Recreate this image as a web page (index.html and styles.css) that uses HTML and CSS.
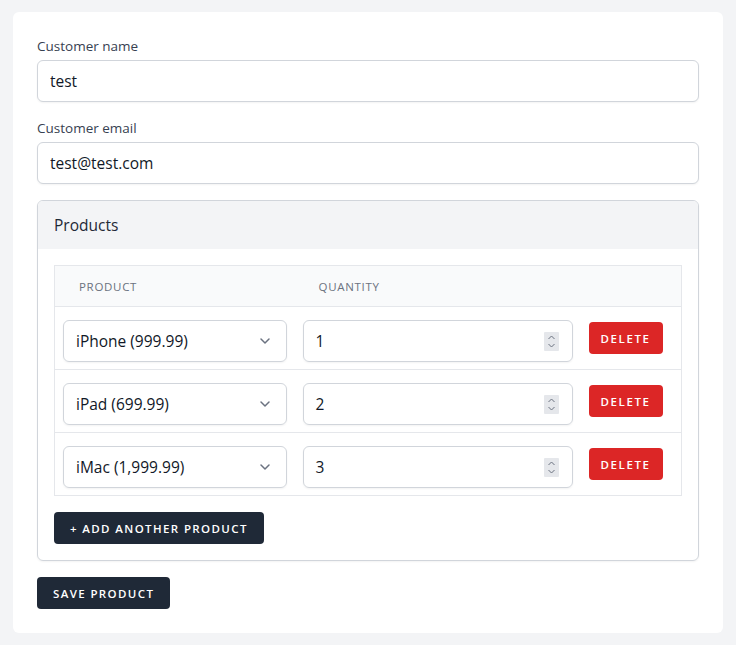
FILE: index.html
```html
<!DOCTYPE html>
<html>
<head>
<meta charset="utf-8">
<link rel="stylesheet" href="styles.css">
</head>
<body>
<div class="page">
  <form class="card">
    <div class="field">
      <label class="label">Customer name</label>
      <input class="input" type="text" value="test">
    </div>
    <div class="field">
      <label class="label">Customer email</label>
      <input class="input" type="text" value="test@test.com">
    </div>
    <div class="panel">
      <div class="panel-head">Products</div>
      <div class="panel-body">
        <table class="table">
          <colgroup><col class="c1"><col class="c2"><col class="c3"></colgroup>
          <thead>
            <tr><th>Product</th><th>Quantity</th><th></th></tr>
          </thead>
          <tbody>
            <tr>
              <td><div class="select"><span>iPhone (999.99)</span><svg class="chev" viewBox="0 0 20 20" width="20" height="20"><path d="M6 8l4 4 4-4" fill="none" stroke="#6b7280" stroke-width="1.5" stroke-linecap="round" stroke-linejoin="round"/></svg></div></td>
              <td><div class="num"><span>1</span><span class="spin"><svg viewBox="0 0 15 19" width="15" height="19"><path d="M4.5 7l3-3 3 3M4.5 12l3 3 3-3" fill="none" stroke="#6b7280" stroke-width="1"/></svg></span></div></td>
              <td><button type="button" class="btn-del">Delete</button></td>
            </tr>
            <tr>
              <td><div class="select"><span>iPad (699.99)</span><svg class="chev" viewBox="0 0 20 20" width="20" height="20"><path d="M6 8l4 4 4-4" fill="none" stroke="#6b7280" stroke-width="1.5" stroke-linecap="round" stroke-linejoin="round"/></svg></div></td>
              <td><div class="num"><span>2</span><span class="spin"><svg viewBox="0 0 15 19" width="15" height="19"><path d="M4.5 7l3-3 3 3M4.5 12l3 3 3-3" fill="none" stroke="#6b7280" stroke-width="1"/></svg></span></div></td>
              <td><button type="button" class="btn-del">Delete</button></td>
            </tr>
            <tr>
              <td><div class="select"><span>iMac (1,999.99)</span><svg class="chev" viewBox="0 0 20 20" width="20" height="20"><path d="M6 8l4 4 4-4" fill="none" stroke="#6b7280" stroke-width="1.5" stroke-linecap="round" stroke-linejoin="round"/></svg></div></td>
              <td><div class="num"><span>3</span><span class="spin"><svg viewBox="0 0 15 19" width="15" height="19"><path d="M4.5 7l3-3 3 3M4.5 12l3 3 3-3" fill="none" stroke="#6b7280" stroke-width="1"/></svg></span></div></td>
              <td><button type="button" class="btn-del">Delete</button></td>
            </tr>
          </tbody>
        </table>
        <button type="button" class="btn-dark btn-add">+ Add another product</button>
      </div>
    </div>
    <button type="button" class="btn-dark">Save product</button>
  </form>
</div>
</body>
</html>
```
FILE: styles.css
```css
* { box-sizing: border-box; }
html, body { margin: 0; padding: 0; }
body {
  background: #f3f4f6;
  font-family: "Open Sans", "Noto Sans", sans-serif;
  color: #111827;
}
.page { padding: 12px 13px; }
.card {
  background: #fff;
  border-radius: 6px;
  padding: 24px 24px 24px;
  display: flex;
  flex-direction: column;
  align-items: flex-start;
}
.field { width: 100%; margin-bottom: 16px; }
.label {
  display: block;
  font-size: 13.5px;
  line-height: 20px;
  color: #374151;
  margin-bottom: 4px;
}
.input {
  display: block;
  width: 100%;
  height: 42px;
  border: 1px solid #d1d5db;
  border-radius: 6px;
  padding: 0 12px;
  font: inherit;
  font-size: 15.5px;
  color: #111827;
  box-shadow: 0 1px 2px rgba(0,0,0,0.05);
}
.panel {
  width: 100%;
  border: 1px solid #d1d5db;
  border-radius: 6px;
  overflow: hidden;
  margin-bottom: 16px;
  box-shadow: 0 1px 2px rgba(0,0,0,0.05);
}
.panel-head {
  background: #f3f4f6;
  height: 48px;
  display: flex;
  align-items: center;
  padding: 0 16px;
  font-size: 15.5px;
  color: #1f2937;
}
.panel-body { padding: 16px 16px 16px; }
.table {
  width: 100%;
  border-collapse: collapse;
  table-layout: fixed;
  border: 1px solid #e5e7eb;
  margin-bottom: 16px;
}
.c1 { width: 240px; }
.c2 { width: 286px; }
.table th {
  background: #f9fafb;
  height: 41px;
  text-align: left;
  padding: 0 24px;
  font-size: 11.5px;
  font-weight: 400;
  text-transform: uppercase;
  letter-spacing: 0.06em;
  color: #6b7280;
  border-bottom: 1px solid #e5e7eb;
}
.table td {
  padding: 13px 8px 7px;
  border-top: 1px solid #e5e7eb;
  vertical-align: top;
  height: 63px;
}
.table td:last-child { padding-top: 15px; }
.select, .num {
  height: 42px;
  border: 1px solid #d1d5db;
  border-radius: 6px;
  display: flex;
  align-items: center;
  justify-content: space-between;
  padding: 0 12px;
  font-size: 15.5px;
  color: #111827;
  box-shadow: 0 1px 2px rgba(0,0,0,0.05);
}
.select { padding-right: 11px; }
.chev { display: block; }
.num { padding-right: 13px; }
.spin {
  display: flex;
  background: #e5e7eb;
  border-radius: 1px;
}
.spin svg { display: block; }
.btn-del {
  background: #dc2626;
  color: #fff;
  border: 0;
  border-radius: 4px;
  height: 32px;
  padding: 0 12px;
  font-family: inherit;
  font-size: 11.5px;
  font-weight: 600;
  letter-spacing: 0.14em;
  text-transform: uppercase;
}
.btn-dark {
  background: #1f2937;
  color: #fff;
  border: 0;
  border-radius: 4px;
  height: 32px;
  padding: 0 16px;
  font-family: inherit;
  font-size: 11.5px;
  font-weight: 600;
  letter-spacing: 0.12em;
  text-transform: uppercase;
}
.btn-add { display: block; }
```
